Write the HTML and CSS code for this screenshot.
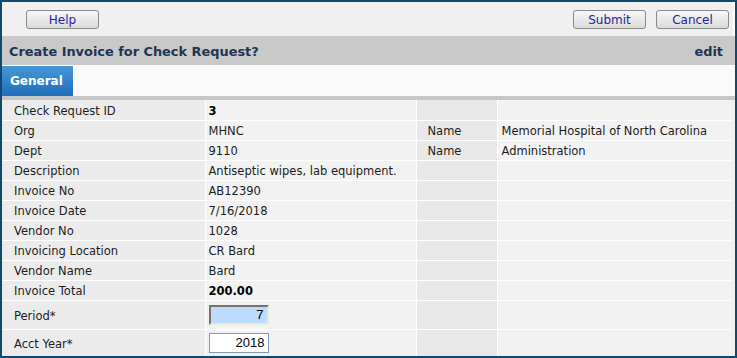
FILE: index.html
```html
<!DOCTYPE html>
<html lang="en">
  <head>
    <meta charset="utf-8" />
    <title>Create Invoice for Check Request?</title>
    <link rel="stylesheet" href="styles.css">
  </head>
  <body>
    <div class="frame">
      <div class="toolbar">
        <button class="btn">Help</button>
        <span class="spacer"></span>
        <button class="btn">Submit</button>
        <button class="btn">Cancel</button>
      </div>

      <div class="titlebar">
        <span class="title">Create Invoice for Check Request?</span>
        <span class="mode">edit</span>
      </div>

      <div class="tabs">
        <span class="tab">General</span>
      </div>
      <div class="tabline"></div>

      <table class="grid">
        <colgroup>
          <col class="c-label" />
          <col class="c-value" />
          <col class="c-label2" />
          <col class="c-value2" />
        </colgroup>
        <tr>
          <td class="label">Check Request ID</td>
          <td class="value strong">3</td>
          <td class="label2"></td>
          <td class="value2"></td>
        </tr>
        <tr>
          <td class="label">Org</td>
          <td class="value">MHNC</td>
          <td class="label2">Name</td>
          <td class="value2">Memorial Hospital of North Carolina</td>
        </tr>
        <tr>
          <td class="label">Dept</td>
          <td class="value">9110</td>
          <td class="label2">Name</td>
          <td class="value2">Administration</td>
        </tr>
        <tr>
          <td class="label">Description</td>
          <td class="value">Antiseptic wipes, lab equipment.</td>
          <td class="label2"></td>
          <td class="value2"></td>
        </tr>
        <tr>
          <td class="label">Invoice No</td>
          <td class="value">AB12390</td>
          <td class="label2"></td>
          <td class="value2"></td>
        </tr>
        <tr>
          <td class="label">Invoice Date</td>
          <td class="value">7/16/2018</td>
          <td class="label2"></td>
          <td class="value2"></td>
        </tr>
        <tr>
          <td class="label">Vendor No</td>
          <td class="value">1028</td>
          <td class="label2"></td>
          <td class="value2"></td>
        </tr>
        <tr>
          <td class="label">Invoicing Location</td>
          <td class="value">CR Bard</td>
          <td class="label2"></td>
          <td class="value2"></td>
        </tr>
        <tr>
          <td class="label">Vendor Name</td>
          <td class="value">Bard</td>
          <td class="label2"></td>
          <td class="value2"></td>
        </tr>
        <tr>
          <td class="label">Invoice Total</td>
          <td class="value strong">200.00</td>
          <td class="label2"></td>
          <td class="value2"></td>
        </tr>
        <tr class="row-input row-period">
          <td class="label">Period*</td>
          <td class="value"><input class="field field-focus" type="text" value="7" /></td>
          <td class="label2"></td>
          <td class="value2"></td>
        </tr>
        <tr class="row-input row-year">
          <td class="label">Acct Year*</td>
          <td class="value"><input class="field" type="text" value="2018" /></td>
          <td class="label2"></td>
          <td class="value2"></td>
        </tr>
      </table>
    </div>
  </body>
</html>
```

FILE: styles.css
```css
html,
body {
  margin: 0;
  padding: 0;
  background-color: #0e4a6e;
}

*,
:after,
:before {
  box-sizing: border-box;
}

.frame {
  display: flex;
  flex-direction: column;
  width: 737px;
  height: 358px;
  border: 2px solid #0e4a6e;
  background-color: #f0f0f0;
  font-family: "DejaVu Sans", Verdana, sans-serif;
  font-size: 11.5px;
  color: #1c1c1c;
  overflow: hidden;
}

/* top button bar */
.toolbar {
  display: flex;
  align-items: flex-start;
  gap: 10px;
  height: 34px;
  padding: 8px 4px 0 24px;
  border-right: 2px solid #fafafa;
}

.spacer {
  flex: 1;
}

.btn {
  width: 73px;
  height: 19px;
  padding: 1px 0 0 0;
  border: 1px solid #8a8a8a;
  border-radius: 3px;
  background: linear-gradient(#f7f7f7, #e9e9e9 50%, #dadada);
  color: #2b1f9e;
  font-family: "DejaVu Sans", Verdana, sans-serif;
  font-size: 12px;
  line-height: 16px;
}

/* title */
.titlebar {
  display: flex;
  align-items: center;
  justify-content: space-between;
  height: 29px;
  padding: 1px 12px 0 7px;
  background-color: #c8c9c8;
  color: #1f3553;
  font-weight: bold;
  font-size: 12.9px;
}

/* tabs */
.tabs {
  display: flex;
  height: 31px;
  padding-top: 1px;
  background-color: #fafafa;
}

.tab {
  display: flex;
  align-items: center;
  padding: 0 10px 0 8px;
  width: 72px;
  border-right: 1px solid #ffffff;
  background: linear-gradient(#4596d8, #1f6fba);
  color: #ffffff;
  font-weight: bold;
  font-size: 12px;
}

.tabline {
  height: 4px;
  background-color: #c6c6c6;
}

/* data grid */
.grid {
  width: 730px;
  border-collapse: collapse;
  border-style: hidden;
  table-layout: fixed;
}

.grid td {
  height: 20px;
  padding: 2px 0 0 0;
  border: 1px solid #ffffff;
  white-space: nowrap;
  overflow: hidden;
}

.c-label {
  width: 203px;
}

.c-value {
  width: 211px;
}

.c-label2 {
  width: 81px;
}

.grid .label {
  padding-left: 12px;
  background-color: #ebebeb;
}

.grid .value {
  padding-left: 3px;
  background-color: #f2f2f2;
}

.grid .label2 {
  padding-left: 11px;
  background-color: #e8e8e8;
}

.grid .value2 {
  padding-left: 4px;
  background-color: #f2f2f2;
}

.grid .strong {
  font-weight: bold;
  color: #000;
}

.grid .row-input td {
  padding-top: 0;
}

.grid .row-input .label {
  padding-top: 2px;
}

.grid .row-period td {
  height: 29px;
}

.grid .row-year td {
  height: 27px;
}

.field {
  display: block;
  width: 60px;
  height: 20px;
  padding: 0 3px 0 2px;
  border: 1px solid #7f9db9;
  background-color: #ffffff;
  color: #000;
  text-align: right;
  font-family: "Liberation Sans", Arial, sans-serif;
  font-size: 13px;
}

.field-focus {
  border: 2px solid;
  border-color: #77736b #ece9d8 #ece9d8 #77736b;
  background-color: #bcdcff;
}
```
